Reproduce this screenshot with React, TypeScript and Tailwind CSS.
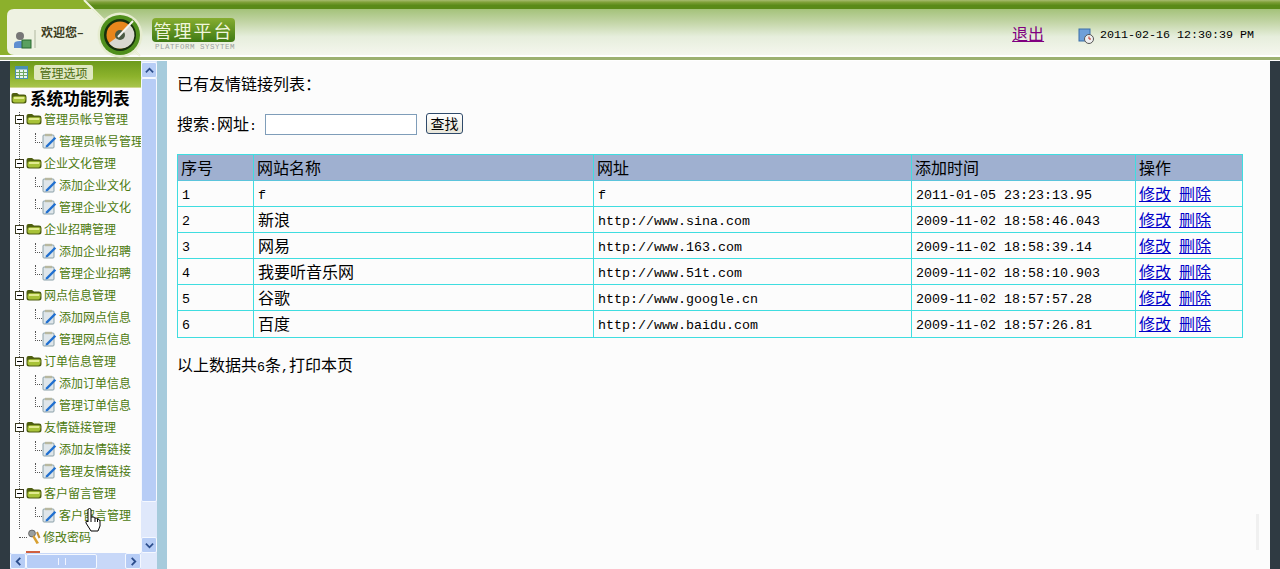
import React from "react";

const tree: { t: string; c: string[] }[] = [
  { t: "管理员帐号管理", c: ["管理员帐号管理"] },
  { t: "企业文化管理", c: ["添加企业文化", "管理企业文化"] },
  { t: "企业招聘管理", c: ["添加企业招聘", "管理企业招聘"] },
  { t: "网点信息管理", c: ["添加网点信息", "管理网点信息"] },
  { t: "订单信息管理", c: ["添加订单信息", "管理订单信息"] },
  { t: "友情链接管理", c: ["添加友情链接", "管理友情链接"] },
  { t: "客户留言管理", c: ["客户留言管理"] },
];

const rows = [
  ["1", "f", "f", "2011-01-05 23:23:13.95"],
  ["2", "新浪", "http://www.sina.com", "2009-11-02 18:58:46.043"],
  ["3", "网易", "http://www.163.com", "2009-11-02 18:58:39.14"],
  ["4", "我要听音乐网", "http://www.51t.com", "2009-11-02 18:58:10.903"],
  ["5", "谷歌", "http://www.google.cn", "2009-11-02 18:57:57.28"],
  ["6", "百度", "http://www.baidu.com", "2009-11-02 18:57:26.81"],
];

const mono = "font-['Liberation_Mono',monospace] text-[13.33px]";

function Folder({ className }: { className?: string }) {
  return (
    <svg viewBox="0 0 16 12" className={className}>
      <path d="M0.5 3 Q0.5 1 2.5 1 L6 1 L8 2.6 L13 2.6 Q15.5 2.6 15.5 5 L15.5 9 Q15.5 11.5 13 11.5 L3 11.5 Q0.5 11.5 0.5 9 Z" fill="#4f5f10" />
      <path d="M1.6 6 Q1.6 4.2 4 4.2 L13 4.2 Q14.8 4.2 14.6 6 L14.2 8.6 Q14 10.4 12.4 10.4 L3.6 10.4 Q1.6 10.4 1.6 8.6 Z" fill="#a8c238" />
      <path d="M3 5.1 L13.4 5.1 L13 7 L3 7 Z" fill="#e2eb90" />
    </svg>
  );
}

function NoteIcon() {
  return (
    <svg viewBox="0 0 15 16" className="h-4 w-[15px] shrink-0">
      <rect x="1" y="2" width="11" height="13" rx="1" fill="#dfe6ea" stroke="#8aa0a8" />
      <rect x="3" y="0.8" width="7" height="2.4" fill="#b8b8a0" />
      <path d="M4 12.5 L12.5 4 L14.2 5.6 L5.8 14 L3.5 14.6 Z" fill="#1f6fd0" />
    </svg>
  );
}

function MinusBox() {
  return (
    <span className="z-10 flex h-[9px] w-[9px] shrink-0 items-center justify-center border border-[#3a3a20] bg-white">
      <span className="h-px w-[5px] bg-black" />
    </span>
  );
}

function ScrollBtn({ d }: { d: string }) {
  return (
    <div className="flex h-4 w-4 shrink-0 items-center justify-center rounded-[2px] border border-[#f4f8ff] bg-[#b7cdf6]">
      <svg viewBox="0 0 10 10" className="h-[9px] w-[9px]">
        <path d={d} fill="none" stroke="#2c4d8c" strokeWidth="2" />
      </svg>
    </div>
  );
}

function Tree() {
  return (
    <div className="relative flex-1 overflow-hidden bg-[#fcfcfc] text-[12px] text-[#4c7a10]">
      <div className="flex h-5 items-center pl-px text-[16.6px] leading-5 font-bold text-black">
        <Folder className="mr-[3px] h-3 w-4 shrink-0" />
        <span className="whitespace-nowrap">系统功能列表</span>
      </div>
      <div className="absolute top-6 bottom-6 left-[9px] border-l border-dotted border-[#555]" />
      {tree.map((g) => (
        <div key={g.t}>
          <div className="flex h-[22px] items-center pl-[5px]">
            <MinusBox />
            <Folder className="mx-[2px] h-3 w-4 shrink-0" />
            <span className="whitespace-nowrap">{g.t}</span>
          </div>
          {g.c.map((c, i) => (
            <div key={i} className="flex h-[22px] items-center pl-[25px]">
              <span className="mb-[6px] h-[10px] w-[7px] shrink-0 border-b border-l border-dotted border-[#555]" />
              <NoteIcon />
              <span className="ml-[2px] whitespace-nowrap">{c}</span>
            </div>
          ))}
        </div>
      ))}
      <div className="flex h-[22px] items-center pl-[9px]">
        <span className="h-px w-[8px] shrink-0 border-b border-dotted border-[#555]" />
        <svg viewBox="0 0 15 16" className="h-4 w-[15px] shrink-0">
          <circle cx="5" cy="4.5" r="3.4" fill="#9aa0a0" stroke="#666" />
          <path d="M7 6 L12 14 L9.5 15 L5.5 8 Z" fill="#d8a030" />
          <path d="M10 3 L12.5 9" stroke="#c89030" strokeWidth="2" />
        </svg>
        <span className="ml-px whitespace-nowrap">修改密码</span>
      </div>
      <div className="absolute bottom-0 left-[16px] h-[2px] w-[14px] bg-[#d06040]" />
    </div>
  );
}

export default function App() {
  return (
    <div className="flex h-[569px] w-[1280px] flex-col overflow-hidden bg-[#fcfcfc] font-['Noto_Sans_CJK_SC',sans-serif] text-[16px] text-black">
      {/* Header */}
      <header className="relative flex h-[61px] shrink-0 flex-col">
        <div className="h-[9px] bg-[linear-gradient(#a8bc70_0%,#7fa038_25%,#5a8a18_60%,#5a8a18_100%)]" />
        <div className="flex h-[46px] items-center justify-end bg-[linear-gradient(#a4c27a_0%,#c4d6a8_30%,#e6eedc_60%,#f5f6ee_100%)] pr-[26px]">
          <a className="mt-[2px] mr-[34px] cursor-pointer text-[#800080] underline">退出</a>
          <svg viewBox="0 0 16 16" className="mt-2 mr-[6px] h-4 w-4">
            <rect x="1" y="1" width="11" height="12" fill="#6f9fd8" stroke="#3a6ea8" />
            <circle cx="11" cy="11" r="4.5" fill="#f0f0f0" stroke="#555" />
            <path d="M11 8.5 V11 H13" stroke="#c03020" fill="none" />
          </svg>
          <span className="mt-2 font-['Liberation_Mono',monospace] text-[11.67px]">2011-02-16 12:30:39 PM</span>
        </div>
        <div className="h-[2px] bg-white" />
        <div className="h-[3px] bg-[#9cb070]" />
        <div className="h-px bg-white" />

        {/* top left green corner and welcome panel */}
        <svg className="absolute top-0 left-0 h-[61px] w-[150px]" viewBox="0 0 150 61">
          <path d="M0 0 H85 L140 55 H0 Z" fill="#8cb02c" />
          <path d="M7 16 Q7 9 14 9 H92 L138 55 H14 Q7 55 7 48 Z" fill="#eef2e2" />
          <path d="M84 0 L140 56" stroke="#f0f4e0" strokeWidth="2" fill="none" />
          <path d="M35 30 V48" stroke="#b0b8a0" />
          <circle cx="20" cy="36" r="4" fill="#777" />
          <path d="M14 48 V44 Q14 41 20 41 Q26 41 26 44 V48 Z" fill="#5f8fd0" />
          <rect x="22" y="40" width="9" height="8" fill="#5aa060" stroke="#2a6a30" />
        </svg>
        <span className="absolute top-[24px] left-[41px] text-[12px] leading-4 font-bold text-[#3c3c20]">欢迎您–</span>
        <svg className="absolute top-[12px] left-[97px] h-[46px] w-[46px]" viewBox="0 0 46 46">
          <circle cx="23" cy="23" r="22.5" fill="#e6ecd0" />
          <circle cx="23" cy="23" r="20" fill="#4f8f1c" />
          <circle cx="23" cy="23" r="16" fill="#16300c" />
          <circle cx="23" cy="23" r="13.5" fill="#e8861c" />
          <path d="M23 23 L33 13 A13.5 13.5 0 0 1 23 36.5 A13.5 13.5 0 0 1 12 31 Z" fill="#d8d8d0" />
          <circle cx="23" cy="23" r="5" fill="#4a5a44" />
          <path d="M21 25 L36 9" stroke="#f4f4f0" strokeWidth="2" />
        </svg>
        <div className="absolute top-[18px] left-[152px] flex h-6 w-[83px] items-center justify-center rounded-[4px] bg-[linear-gradient(#86ad30,#3f7a14)] text-[18px] leading-6 tracking-[2px] text-[#f0f6dc]">
          管理平台
        </div>
        <span className="absolute top-[42px] left-[155px] font-['Liberation_Mono',monospace] text-[7.5px] leading-[10px] tracking-[0.5px] text-[#9a9f9c]">
          PLATFORM SYSYTEM
        </span>
      </header>

      {/* Body */}
      <div className="relative flex min-h-0 flex-1">
        <div className="w-[10px] shrink-0 bg-[#2f3a42]" />
        <aside className="flex w-[131px] shrink-0 flex-col">
          <div className="flex h-[26px] shrink-0 items-center gap-[6px] bg-[linear-gradient(#6d9a1c,#8db32c_60%,#a8c44c)] pb-[3px] pl-[5px]">
            <svg viewBox="0 0 13 13" className="h-[13px] w-[13px]">
              <rect x="0.5" y="0.5" width="12" height="12" fill="#e8f4f0" stroke="#4a90b0" />
              <rect x="0.5" y="0.5" width="12" height="3" fill="#4a90b0" />
              <path d="M1 6.5 H12 M1 9.5 H12 M4.5 4 V12 M8.5 4 V12" stroke="#70a860" />
            </svg>
            <span className="flex h-[15px] w-[59px] items-center justify-center rounded-[2px] bg-[#dfe8c0] text-[12px] leading-none text-[#4c6a10]">管理选项</span>
          </div>
          <div className="h-px shrink-0 bg-[#cfd890]" />
          <Tree />
          <div className="flex h-4 shrink-0 items-center bg-[#c8d8f8]">
            <ScrollBtn d="M7 1 L3 5 L7 9" />
            <div className="flex h-[15px] w-[71px] items-center justify-center rounded-[2px] border border-[#f4f8ff] bg-[#b7cdf6]">
              <span className="h-[7px] w-2 border-x border-[#f0f4ff]" />
            </div>
            <div className="flex-1" />
            <ScrollBtn d="M3 1 L7 5 L3 9" />
          </div>
        </aside>
        <div className="flex w-4 shrink-0 flex-col bg-[#dfe8fb] pt-px pb-4">
          <ScrollBtn d="M1 7 L5 3 L9 7" />
          <div className="h-[424px] w-4 rounded-[2px] border border-[#f4f8ff] bg-[#b7cdf6]" />
          <div className="flex-1" />
          <ScrollBtn d="M1 3 L5 7 L9 3" />
        </div>
        <div className="w-[10px] shrink-0 bg-[#a6cbdc]" />

        {/* Main */}
        <main className="relative w-[1103px] shrink-0 bg-[#fcfcfc] pt-[12px] pl-[10px]">
          <p className="h-5 leading-5">已有友情链接列表：</p>
          <div className="mt-[20px] flex h-[22px] items-center">
            <span className="w-[88px]">
              搜索<span className={mono}>:</span>网址<span className={mono}>:</span>
            </span>
            <input className="h-[21px] w-[152px] border border-[#7f9db9] bg-white" />
            <button className="mb-[2px] ml-[9px] h-[21px] w-[37px] rounded-[3px] border border-[#2f4a6a] bg-[linear-gradient(#ffffff,#e8e6da)] text-[14px] leading-none">查找</button>
          </div>
          <table className="mt-[19px] w-[1065px] table-fixed border-collapse border border-[#3fdde0]">
            <colgroup>
              <col className="w-[76px]" />
              <col className="w-[340px]" />
              <col className="w-[318px]" />
              <col className="w-[224px]" />
              <col className="w-[107px]" />
            </colgroup>
            <thead>
              <tr className="h-[26px] bg-[#9fb0d0]">
                {["序号", "网站名称", "网址", "添加时间", "操作"].map((h) => (
                  <th key={h} className="border border-[#3fdde0] border-b-[#5cc4dc] px-[3px] pt-0 pb-[2px] text-left leading-5 font-normal">{h}</th>
                ))}
              </tr>
            </thead>
            <tbody>
              {rows.map((r) => (
                <tr key={r[0]} className={r[0] === "6" ? "h-[27px]" : "h-[26px]"}>
                  <td className={`border border-[#3fdde0] px-1 pt-1 pb-0 ${mono}`}>{r[0]}</td>
                  <td className={/^[a-z]/.test(r[1]) ? `border border-[#3fdde0] px-1 pt-1 pb-0 ${mono}` : "border border-[#3fdde0] px-1 pt-0 pb-[2px] leading-5"}>
                    {r[1]}
                  </td>
                  <td className={`border border-[#3fdde0] px-1 pt-1 pb-0 ${mono}`}>{r[2]}</td>
                  <td className={`border border-[#3fdde0] px-1 pt-1 pb-0 ${mono}`}>{r[3]}</td>
                  <td className="border border-[#3fdde0] px-[3px] pt-0 pb-[2px] leading-5 text-[#0000c8]">
                    <a className="cursor-pointer underline">修改</a>
                    <a className="ml-2 cursor-pointer underline">删除</a>
                  </td>
                </tr>
              ))}
            </tbody>
          </table>
          <p className="mt-[16px] leading-5">
            以上数据共<span className={mono}>6</span>条<span className={mono}>,</span>打印本页
          </p>
          <div className="absolute top-[453px] right-[11px] h-[36px] w-[3px] bg-[#f0f0f0]" />
        </main>
        <div className="w-[10px] shrink-0 bg-[#2f3a42]" />

        {/* Hand cursor */}
        <svg className="absolute top-[447px] left-[85px] h-[24px] w-[16px]" viewBox="0 0 16 24">
          <path d="M3 2 Q3 0.5 4.5 0.5 Q6 0.5 6 2 V9 L8 9 Q9.5 9 10 10 Q12 9.5 12.5 11 Q14.5 11 15 13 V18 L13 23 H6 L1 15 Q0.5 13 2 13 L3 14 Z" fill="#fff" stroke="#000" />
          <path d="M6 9 V14 M10 10 V14 M12.5 11 V14" stroke="#000" fill="none" />
        </svg>
      </div>
    </div>
  );
}
